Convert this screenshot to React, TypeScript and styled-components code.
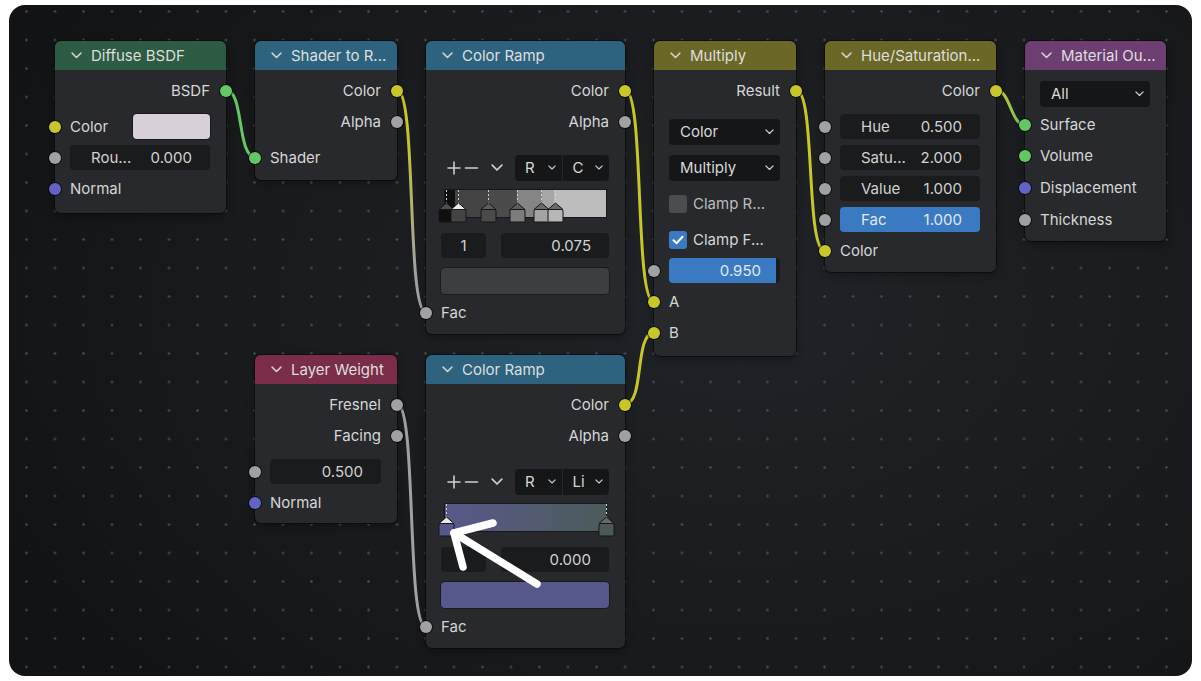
import React from 'react';
import styled, { createGlobalStyle } from 'styled-components';

const GlobalStyle = createGlobalStyle`
  html, body {
    margin: 0;
    padding: 0;
    background: #ffffff;
  }
  body {
    font-family: Inter, "Noto Sans", sans-serif;
    -webkit-font-smoothing: antialiased;
  }
`;

const Frame = styled.div`
  position: relative;
  margin: 5px 0 0 9px;
  width: 1183px;
  height: 671px;
  border-radius: 16px;
  overflow: hidden;
  background:
    radial-gradient(circle, rgba(78, 80, 86, 0.85) 0.9px, transparent 1.6px) 3.25px -7.75px / 28.5px 28.5px,
    radial-gradient(ellipse 70% 85% at 62% 45%, #202327 0%, #191b1e 55%, #121314 100%);
`;

const WireLayer = styled.svg`
  position: absolute;
  left: 0;
  top: 0;
  pointer-events: none;
`;

const ArrowLayer = styled.svg`
  position: absolute;
  left: 0;
  top: 0;
  pointer-events: none;
  z-index: 5;
`;

const NodeBox = styled.div<{ $x: number; $y: number; $w: number }>`
  position: absolute;
  left: ${p => p.$x}px;
  top: ${p => p.$y}px;
  width: ${p => p.$w}px;
  background: #27292c;
  border-radius: 6px;
  box-shadow: 0 0 0 1px rgba(10, 10, 12, 0.7), 0 3px 8px rgba(0, 0, 0, 0.35);
  z-index: 2;
`;

const Header = styled.div<{ $color: string }>`
  height: 29px;
  display: flex;
  align-items: center;
  gap: 9px;
  padding-left: 16px;
  border-radius: 6px 6px 0 0;
  background: ${p => p.$color};
  color: #dedede;
  font-size: 15px;
  white-space: nowrap;
  overflow: hidden;
`;

const Body = styled.div<{ $pb: number }>`
  display: flex;
  flex-direction: column;
  padding: 5px 16px ${p => p.$pb}px 15px;
`;

const Row = styled.div<{ $side?: 'in' | 'out'; $mt?: number }>`
  position: relative;
  height: 31px;
  margin-top: ${p => p.$mt ?? 0}px;
  display: flex;
  align-items: center;
  justify-content: ${p => (p.$side === 'out' ? 'flex-end' : 'flex-start')};
  gap: 6px;
  font-size: 15px;
  color: #d6d6d6;
`;

const Socket = styled.span<{ $c: string; $side: 'in' | 'out' }>`
  position: absolute;
  top: 50%;
  ${p => (p.$side === 'in' ? 'left: -21px;' : 'right: -22px;')}
  width: 12px;
  height: 12px;
  margin-top: -6px;
  border-radius: 50%;
  background: ${p => p.$c};
  box-shadow: 0 0 0 1px rgba(0, 0, 0, 0.6);
`;

const Label = styled.span`
  flex: 1;
`;

const Field = styled.div<{ $active?: boolean; $align?: string }>`
  flex: 1;
  height: 25px;
  border-radius: 4px;
  background: ${p => (p.$active ? '#3a7ac3' : '#1a1b1d')};
  display: flex;
  align-items: center;
  justify-content: ${p => p.$align ?? 'space-between'};
  padding: 0 18px 0 21px;
  color: ${p => (p.$active ? '#e2e8f0' : '#d2d2d2')};
  font-size: 15px;
  white-space: nowrap;
`;

const Slider = styled.div<{ $fill: number }>`
  flex: 1;
  height: 25px;
  border-radius: 4px;
  background: linear-gradient(to right, #3a7ac3 ${p => p.$fill}%, #1a1b1d ${p => p.$fill}%);
  display: flex;
  align-items: center;
  justify-content: flex-end;
  padding-right: 19px;
  color: #e2e8f0;
  font-size: 15px;
`;

const Swatch = styled.div<{ $c: string; $w?: number; $h?: number }>`
  width: ${p => (p.$w ? `${p.$w}px` : 'auto')};
  flex: ${p => (p.$w ? '0 0 auto' : '1')};
  height: ${p => p.$h ?? 25}px;
  border-radius: 4px;
  background: ${p => p.$c};
  box-shadow: 0 0 0 1px rgba(0, 0, 0, 0.35);
`;

const Select = styled.div`
  flex: 1;
  height: 26px;
  border-radius: 4px;
  background: #151617;
  display: flex;
  align-items: center;
  justify-content: space-between;
  padding: 0 6px 0 11px;
  color: #d8d8d8;
  font-size: 15px;
`;

const Check = styled.span<{ $on?: boolean }>`
  width: 18px;
  height: 18px;
  border-radius: 3px;
  background: ${p => (p.$on ? '#3a7ac3' : '#4c4d50')};
  display: flex;
  align-items: center;
  justify-content: center;
`;

const ToolBar = styled.div`
  height: 31px;
  margin-top: 15px;
  display: flex;
  align-items: center;
`;

const ToolIcons = styled.div`
  flex: 0 0 68px;
  display: flex;
  align-items: center;
  padding-left: 6px;
  gap: 3px;
`;

const SplitSelect = styled.div`
  flex: 1;
  height: 26px;
  display: flex;
  gap: 1px;
`;

const Segment = styled.div<{ $first?: boolean }>`
  flex: 1;
  background: #151617;
  border-radius: ${p => (p.$first ? '4px 0 0 4px' : '0 4px 4px 0')};
  display: flex;
  align-items: center;
  justify-content: space-between;
  padding: 0 6px 0 10px;
  color: #d8d8d8;
  font-size: 15px;
`;

const RampWrap = styled.div`
  position: relative;
  height: 33px;
  margin-top: 7px;
`;

const RampBar = styled.div<{ $bg: string }>`
  margin: 0 3px 0 4px;
  height: 27px;
  background: ${p => p.$bg};
  box-shadow: 0 0 0 1px rgba(0, 0, 0, 0.4);
`;

const MarkerSvg = styled.svg<{ $x: number }>`
  position: absolute;
  top: 0;
  left: ${p => p.$x - 8.5}px;
`;

const PairRow = styled.div`
  display: flex;
  gap: 15px;
  margin-top: 10px;
`;

const SmallBox = styled(Field)`
  flex: 0 0 45px;
  padding: 0;
`;

const Chevron: React.FC<{ size?: number; color?: string }> = ({ size = 10, color = '#d0d0d0' }) => (
  <svg width={size} height={size * 0.6} viewBox="0 0 10 6" fill="none">
    <path d="M1 1 L5 5 L9 1" stroke={color} strokeWidth="1.4" strokeLinecap="round" strokeLinejoin="round" />
  </svg>
);

const Marker: React.FC<{ x: number; fill: string; top: string }> = ({ x, fill, top }) => (
  <MarkerSvg $x={x} width="17" height="33" viewBox="0 0 17 33">
    <line x1="8.5" y1="0" x2="8.5" y2="13" stroke="#cfcfcf" strokeWidth="1" strokeDasharray="2 2" />
    <path d="M1 19.5 L8.5 13 L16 19.5 Z" fill={top} stroke="#161616" strokeWidth="1" strokeLinejoin="round" />
    <rect x="1" y="19.5" width="15" height="12.5" rx="1.5" fill={fill} stroke="#161616" strokeWidth="1" />
  </MarkerSvg>
);

const GREEN = '#63c763';
const YELLOW = '#c7c729';
const GRAY = '#a1a1a1';
const PURPLE = '#6363c7';

const H_SHADER = '#2d5b43';
const H_CONVERT = '#2e6380';
const H_COLOR = '#6b6726';
const H_OUTPUT = '#6c3e72';
const H_INPUT = '#7a2c48';

const wire = (x1: number, y1: number, x2: number, y2: number, h = 20) =>
  `M${x1} ${y1} C${x1 + h} ${y1} ${x2 - h} ${y2} ${x2} ${y2}`;

const Wires: React.FC = () => (
  <WireLayer width="1183" height="671">
    <defs>
      <linearGradient id="yg" gradientUnits="userSpaceOnUse" x1="0" y1="120" x2="0" y2="260">
        <stop offset="0" stopColor={YELLOW} />
        <stop offset="1" stopColor={GRAY} />
      </linearGradient>
      <linearGradient id="ygr" gradientUnits="userSpaceOnUse" x1="990" y1="0" x2="1014" y2="0">
        <stop offset="0" stopColor={YELLOW} />
        <stop offset="1" stopColor={GREEN} />
      </linearGradient>
    </defs>
    <g fill="none" strokeWidth="3" strokeLinecap="round">
      <path d={wire(217, 85, 246, 152, 18)} stroke={GREEN} />
      <path d={wire(388, 85, 417, 307)} stroke="url(#yg)" />
      <path d={wire(616, 85, 645, 297)} stroke={YELLOW} />
      <path d={wire(616, 399, 645, 328)} stroke={YELLOW} />
      <path d={wire(787, 85, 816, 246)} stroke={YELLOW} />
      <path d={wire(987, 85, 1016, 120, 14)} stroke="url(#ygr)" />
      <path d={wire(388, 399, 417, 622)} stroke={GRAY} />
    </g>
  </WireLayer>
);

const TOP_RAMP =
  'linear-gradient(to right, #0f0f0f 0%, #0f0f0f 6%, #434343 6%, #434343 27%, #4b4b4b 27%, #4b4b4b 45%, #858585 45%, #858585 60%, #a6a6a6 60%, #a6a6a6 68%, #bdbdbd 68%, #bdbdbd 100%)';
const BOTTOM_RAMP = 'linear-gradient(to right, #58598a 0%, #4c5b5a 100%)';

const RampTools: React.FC<{ a: string; b: string }> = ({ a, b }) => (
  <ToolBar>
    <ToolIcons>
      <svg width="14" height="14" viewBox="0 0 14 14">
        <path d="M7 1 V13 M1 7 H13" stroke="#cfcfcf" strokeWidth="1.6" strokeLinecap="round" />
      </svg>
      <svg width="15" height="14" viewBox="0 0 15 14">
        <path d="M1.5 7 H13.5" stroke="#cfcfcf" strokeWidth="1.6" strokeLinecap="round" />
      </svg>
      <span style={{ marginLeft: 9, display: 'flex' }}>
        <Chevron size={12} />
      </span>
    </ToolIcons>
    <SplitSelect>
      <Segment $first>
        {a}
        <Chevron size={8} />
      </Segment>
      <Segment>
        {b}
        <Chevron size={8} />
      </Segment>
    </SplitSelect>
  </ToolBar>
);

const App: React.FC = () => {
  return (
    <>
      <GlobalStyle />
      <Frame>
        <Wires />

        <NodeBox $x={46} $y={36} $w={171}>
          <Header $color={H_SHADER}>
            <Chevron size={11} />
            Diffuse BSDF
          </Header>
          <Body $pb={9}>
            <Row $side="out">
              BSDF
              <Socket $c={GREEN} $side="out" />
            </Row>
            <Row $mt={5}>
              <Socket $c={YELLOW} $side="in" />
              <Label>Color</Label>
              <Swatch $c="#d7d0d9" $w={77} />
            </Row>
            <Row>
              <Socket $c={GRAY} $side="in" />
              <Field>
                <span>Rou...</span>
                <span>0.000</span>
              </Field>
            </Row>
            <Row>
              <Socket $c={PURPLE} $side="in" />
              Normal
            </Row>
          </Body>
        </NodeBox>

        <NodeBox $x={246} $y={36} $w={142}>
          <Header $color={H_CONVERT}>
            <Chevron size={11} />
            Shader to R...
          </Header>
          <Body $pb={7}>
            <Row $side="out">
              Color
              <Socket $c={YELLOW} $side="out" />
            </Row>
            <Row $side="out">
              Alpha
              <Socket $c={GRAY} $side="out" />
            </Row>
            <Row $mt={5}>
              <Socket $c={GREEN} $side="in" />
              Shader
            </Row>
          </Body>
        </NodeBox>

        <NodeBox $x={417} $y={36} $w={199}>
          <Header $color={H_CONVERT}>
            <Chevron size={11} />
            Color Ramp
          </Header>
          <Body $pb={6}>
            <Row $side="out">
              Color
              <Socket $c={YELLOW} $side="out" />
            </Row>
            <Row $side="out">
              Alpha
              <Socket $c={GRAY} $side="out" />
            </Row>
            <RampTools a="R" b="C" />
            <RampWrap>
              <RampBar $bg={TOP_RAMP} />
              <Marker x={5} fill="#101010" top="#505050" />
              <Marker x={17} fill="#444444" top="#e8e8e8" />
              <Marker x={47} fill="#4b4b4b" top="#5c5c5c" />
              <Marker x={76} fill="#7d7d7d" top="#5c5c5c" />
              <Marker x={100} fill="#a4a4a4" top="#6a6a6a" />
              <Marker x={114} fill="#b7b7b7" top="#6a6a6a" />
            </RampWrap>
            <PairRow>
              <SmallBox $align="center">1</SmallBox>
              <Field $align="flex-end">0.075</Field>
            </PairRow>
            <Row $mt={10} style={{ height: 26 }}>
              <Swatch $c="#3d3e40" $h={26} />
            </Row>
            <Row $mt={3}>
              <Socket $c={GRAY} $side="in" />
              Fac
            </Row>
          </Body>
        </NodeBox>

        <NodeBox $x={645} $y={36} $w={142}>
          <Header $color={H_COLOR}>
            <Chevron size={11} />
            Multiply
          </Header>
          <Body $pb={8}>
            <Row $side="out">
              Result
              <Socket $c={YELLOW} $side="out" />
            </Row>
            <Row $mt={10}>
              <Select>
                Color
                <Chevron size={9} />
              </Select>
            </Row>
            <Row $mt={5}>
              <Select>
                Multiply
                <Chevron size={9} />
              </Select>
            </Row>
            <Row $mt={5}>
              <Check />
              <span style={{ color: '#bdbdbd' }}>Clamp R...</span>
            </Row>
            <Row $mt={5}>
              <Check $on>
                <svg width="12" height="10" viewBox="0 0 12 10" fill="none">
                  <path d="M1.5 5.2 L4.6 8.2 L10.5 1.8" stroke="#ffffff" strokeWidth="2" strokeLinecap="round" strokeLinejoin="round" />
                </svg>
              </Check>
              Clamp F...
            </Row>
            <Row>
              <Socket $c={GRAY} $side="in" />
              <Slider $fill={96}>0.950</Slider>
            </Row>
            <Row>
              <Socket $c={YELLOW} $side="in" />
              A
            </Row>
            <Row>
              <Socket $c={YELLOW} $side="in" />
              B
            </Row>
          </Body>
        </NodeBox>

        <NodeBox $x={816} $y={36} $w={171}>
          <Header $color={H_COLOR}>
            <Chevron size={11} />
            Hue/Saturation...
          </Header>
          <Body $pb={6}>
            <Row $side="out">
              Color
              <Socket $c={YELLOW} $side="out" />
            </Row>
            <Row $mt={5}>
              <Socket $c={GRAY} $side="in" />
              <Field>
                <span>Hue</span>
                <span>0.500</span>
              </Field>
            </Row>
            <Row>
              <Socket $c={GRAY} $side="in" />
              <Field>
                <span>Satu...</span>
                <span>2.000</span>
              </Field>
            </Row>
            <Row>
              <Socket $c={GRAY} $side="in" />
              <Field>
                <span>Value</span>
                <span>1.000</span>
              </Field>
            </Row>
            <Row>
              <Socket $c={GRAY} $side="in" />
              <Field $active>
                <span>Fac</span>
                <span>1.000</span>
              </Field>
            </Row>
            <Row>
              <Socket $c={YELLOW} $side="in" />
              Color
            </Row>
          </Body>
        </NodeBox>

        <NodeBox $x={1016} $y={36} $w={141}>
          <Header $color={H_OUTPUT}>
            <Chevron size={11} />
            Material Ou...
          </Header>
          <Body $pb={6}>
            <Row $mt={3}>
              <Select>
                All
                <Chevron size={9} />
              </Select>
            </Row>
            <Row>
              <Socket $c={GREEN} $side="in" />
              Surface
            </Row>
            <Row>
              <Socket $c={GREEN} $side="in" />
              Volume
            </Row>
            <Row $mt={1}>
              <Socket $c={PURPLE} $side="in" />
              Displacement
            </Row>
            <Row $mt={1}>
              <Socket $c={GRAY} $side="in" />
              Thickness
            </Row>
          </Body>
        </NodeBox>

        <NodeBox $x={246} $y={350} $w={142}>
          <Header $color={H_INPUT}>
            <Chevron size={11} />
            Layer Weight
          </Header>
          <Body $pb={5}>
            <Row $side="out">
              Fresnel
              <Socket $c={GRAY} $side="out" />
            </Row>
            <Row $side="out">
              Facing
              <Socket $c={GRAY} $side="out" />
            </Row>
            <Row $mt={5}>
              <Socket $c={GRAY} $side="in" />
              <Field $align="flex-end">0.500</Field>
            </Row>
            <Row>
              <Socket $c={PURPLE} $side="in" />
              Normal
            </Row>
          </Body>
        </NodeBox>

        <NodeBox $x={417} $y={350} $w={199}>
          <Header $color={H_CONVERT}>
            <Chevron size={11} />
            Color Ramp
          </Header>
          <Body $pb={6}>
            <Row $side="out">
              Color
              <Socket $c={YELLOW} $side="out" />
            </Row>
            <Row $side="out">
              Alpha
              <Socket $c={GRAY} $side="out" />
            </Row>
            <RampTools a="R" b="Li" />
            <RampWrap>
              <RampBar $bg={BOTTOM_RAMP} />
              <Marker x={5} fill="#56578a" top="#e8e8e8" />
              <Marker x={165} fill="#4b5a58" top="#6a6a6a" />
            </RampWrap>
            <PairRow>
              <SmallBox />
              <Field $align="flex-end">0.000</Field>
            </PairRow>
            <Row $mt={10} style={{ height: 26 }}>
              <Swatch $c="#56578a" $h={26} />
            </Row>
            <Row $mt={3}>
              <Socket $c={GRAY} $side="in" />
              Fac
            </Row>
          </Body>
        </NodeBox>

        <ArrowLayer width="1183" height="671">
          <g fill="none" stroke="#ffffff" strokeWidth="7.5" strokeLinecap="round" strokeLinejoin="round">
            <path d="M528 579 L445 528" />
            <path d="M484 518 L445 528 L454 562" />
          </g>
        </ArrowLayer>
      </Frame>
    </>
  );
};

export default App;
